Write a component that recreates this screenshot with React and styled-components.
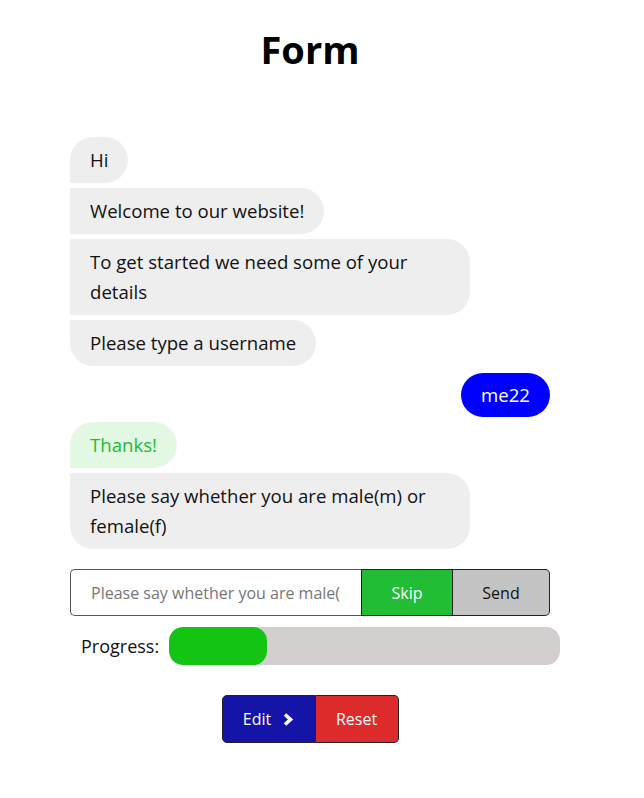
import React, { useState } from 'react';
import styled, { createGlobalStyle } from 'styled-components';

const GlobalStyle = createGlobalStyle`
  body {
    margin: 0;
    background: #ffffff;
    font-family: "Open Sans", "Noto Sans", sans-serif;
    color: #111;
  }
`;

const messages = [
  { id: 1, text: 'Hi', pos: 'first' },
  { id: 2, text: 'Welcome to our website!', pos: 'middle' },
  { id: 3, text: 'To get started we need some of your details', pos: 'middle' },
  { id: 4, text: 'Please type a username', pos: 'last' },
  { id: 5, text: 'me22', from: 'user' },
  { id: 6, text: 'Thanks!', pos: 'first', tone: 'success' },
  { id: 7, text: 'Please say whether you are male(m) or female(f)', pos: 'last' },
];

const Chevron = () => (
  <svg width="12" height="15" viewBox="0 0 12 15" aria-hidden="true">
    <polyline
      points="3,2.5 8.5,7.5 3,12.5"
      fill="none"
      stroke="#fff"
      strokeWidth="3.6"
      strokeLinejoin="miter"
    />
  </svg>
);

const App = () => {
  const [value, setValue] = useState('');
  const progress = 25;

  return (
    <Page>
      <GlobalStyle />
      <Content>
        <Title>Form</Title>

        <Chat>
          {messages.map(m =>
            m.from === 'user' ? (
              <UserBubble key={m.id}>{m.text}</UserBubble>
            ) : (
              <BotBubble key={m.id} $pos={m.pos} $tone={m.tone}>
                {m.text}
              </BotBubble>
            )
          )}
        </Chat>

        <InputRow>
          <TextInput
            value={value}
            onChange={e => setValue(e.target.value)}
            placeholder="Please say whether you are male(m) or female(f)"
          />
          <RowButton $variant="skip">Skip</RowButton>
          <RowButton $variant="send">Send</RowButton>
        </InputRow>

        <ProgressRow>
          <ProgressLabel>Progress:</ProgressLabel>
          <Track>
            <Fill style={{ width: `${progress}%` }} />
          </Track>
        </ProgressRow>

        <Actions>
          <ActionButton $variant="edit">
            Edit <Chevron />
          </ActionButton>
          <ActionButton $variant="reset">Reset</ActionButton>
        </Actions>
      </Content>
    </Page>
  );
};

const Page = styled.div`
  width: 620px;
`;

const Content = styled.div`
  width: 480px;
  margin: 0 auto;
  display: flex;
  flex-direction: column;
`;

const Title = styled.h1`
  margin: 22px 0 0;
  text-align: center;
  font-size: 38px;
  line-height: 54px;
  font-weight: 700;
  color: #000;
`;

const Chat = styled.div`
  margin-top: 61px;
  display: flex;
  flex-direction: column;
  align-items: flex-start;
  gap: 5px;
`;

const BotBubble = styled.div`
  max-width: 400px;
  box-sizing: border-box;
  padding: 8px 20px;
  font-size: 18.6px;
  line-height: 30px;
  background: ${p => (p.$tone === 'success' ? '#e3f9e3' : '#eeeeee')};
  color: ${p => (p.$tone === 'success' ? '#22b93a' : '#111')};
  border-radius: ${p =>
    p.$pos === 'first'
      ? '23px 23px 23px 0'
      : p.$pos === 'last'
      ? '0 23px 23px 23px'
      : '0 23px 23px 0'};
`;

const UserBubble = styled.div`
  align-self: flex-end;
  margin-top: 2px;
  padding: 7px 20px;
  font-size: 18.6px;
  line-height: 30px;
  background: #0000ff;
  color: #fff;
  border-radius: 22px;
`;

const InputRow = styled.div`
  margin-top: 20px;
  display: flex;
  height: 47px;
`;

const TextInput = styled.input`
  flex: 1;
  min-width: 0;
  box-sizing: border-box;
  padding: 0 20px;
  border: 1px solid #555;
  border-right: none;
  border-radius: 5px 0 0 5px;
  font-family: inherit;
  font-size: 16px;
  color: #111;
  outline: none;

  &::placeholder {
    color: #777;
  }
`;

const RowButton = styled.button`
  box-sizing: border-box;
  width: ${p => (p.$variant === 'skip' ? '92px' : '97px')};
  border: 1px solid #222;
  border-left: ${p => (p.$variant === 'send' ? 'none' : '1px solid #222')};
  border-radius: ${p => (p.$variant === 'send' ? '0 5px 5px 0' : '0')};
  background: ${p => (p.$variant === 'skip' ? '#20bd35' : '#c4c4c4')};
  color: ${p => (p.$variant === 'skip' ? '#fff' : '#111')};
  font-family: inherit;
  font-size: 16px;
  cursor: pointer;
`;

const ProgressRow = styled.div`
  margin-top: 11px;
  width: 490px;
  display: flex;
  align-items: center;
  gap: 10px;
`;

const ProgressLabel = styled.span`
  padding-left: 11px;
  font-size: 18px;
  color: #111;
`;

const Track = styled.div`
  flex: 1;
  height: 38px;
  border-radius: 14px;
  background: #d3cfcf;
  overflow: hidden;
`;

const Fill = styled.div`
  height: 100%;
  border-radius: 14px;
  background: #13c413;
`;

const Actions = styled.div`
  margin-top: 30px;
  display: flex;
  justify-content: center;
`;

const ActionButton = styled.button`
  box-sizing: border-box;
  height: 48px;
  width: ${p => (p.$variant === 'edit' ? '94px' : '83px')};
  display: flex;
  align-items: center;
  justify-content: center;
  gap: 11px;
  border: 1px solid #222;
  border-left: ${p => (p.$variant === 'reset' ? 'none' : '1px solid #222')};
  border-radius: ${p => (p.$variant === 'edit' ? '5px 0 0 5px' : '0 5px 5px 0')};
  background: ${p => (p.$variant === 'edit' ? '#1414a8' : '#dd2a2a')};
  color: #fff;
  font-family: inherit;
  font-size: 16px;
  cursor: pointer;
`;

export default App;
